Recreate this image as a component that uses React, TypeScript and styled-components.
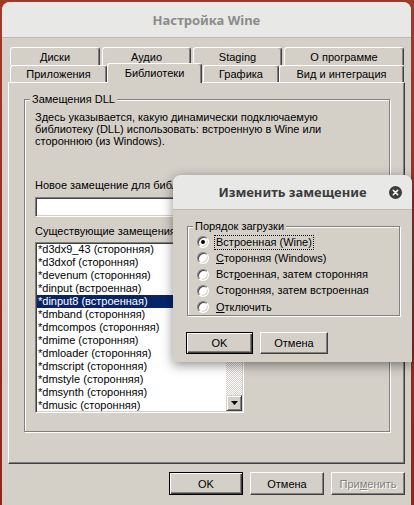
import React from 'react'
import styled, { createGlobalStyle } from 'styled-components'

const GlobalStyle = createGlobalStyle`
    html, body {
        margin: 0;
        padding: 0;
    }
    body {
        background: #8c2c1f;
        font-family: "Liberation Sans", Arial, sans-serif;
        font-size: 11px;
        color: #000;
    }
    * {
        box-sizing: border-box;
    }
`

const Desktop = styled.div`
    position: relative;
    width: 414px;
    height: 505px;
    overflow: hidden;
    padding: 2px 3px 0 2px;
    background: linear-gradient(180deg, #9b3b2b 0%, #88291c 100%);
`

const Window = styled.div`
    display: flex;
    flex-direction: column;
    width: 409px;
    height: 503px;
    border-radius: 8px 8px 0 0;
    background: #d4d0c8;
    overflow: hidden;
`

const TitleBar = styled.div<{ $active?: boolean; $h: number }>`
    flex: none;
    display: grid;
    grid-template-columns: 1fr auto 1fr;
    align-items: center;
    height: ${p => p.$h}px;
    padding: 0 10px;
    background: #e8e8e7;
    border-bottom: 1px solid #bdb9b1;
    font-family: "Noto Sans", "Open Sans", sans-serif;
    font-weight: 700;
    font-size: 13px;
    color: ${p => (p.$active ? '#3c3c3c' : '#8b8b8b')};
`

const TitleText = styled.span`
    grid-column: 2;
`

const CloseButton = styled.span`
    grid-column: 3;
    justify-self: end;
    display: flex;
    width: 13px;
    height: 13px;
`

const Body = styled.div`
    flex: 1;
    display: flex;
    flex-direction: column;
    padding: 9px 6px 0 6px;
`

const TabStrip = styled.div`
    position: relative;
    z-index: 1;
    display: flex;
    flex-direction: column;
    padding-left: 2px;
`

const TabRow = styled.div<{ $h: number; $gap?: number }>`
    display: flex;
    gap: ${p => p.$gap ?? 0}px;
    height: ${p => p.$h}px;
`

const Tab = styled.div<{ $w: number; $ml?: number; $selected?: boolean }>`
    flex: none;
    display: flex;
    align-items: center;
    justify-content: center;
    width: ${p => p.$w}px;
    height: ${p => (p.$selected ? 'calc(100% + 3px)' : '100%')};
    margin-left: ${p => p.$ml ?? 0}px;
    margin-top: ${p => (p.$selected ? -2 : 0)}px;
    padding-bottom: ${p => (p.$selected ? 2 : 0)}px;
    position: relative;
    z-index: ${p => (p.$selected ? 2 : 0)};
    border: 1px solid #fff;
    border-bottom: none;
    border-right-color: #404040;
    border-radius: 3px 3px 0 0;
    box-shadow: inset -1px 0 #808080;
    background: #d4d0c8;
    white-space: nowrap;
`

const Panel = styled.div`
    flex: none;
    display: flex;
    flex-direction: column;
    height: 382px;
    padding: 0 14px 0 15px;
    border: 1px solid;
    border-color: #fff #404040 #404040 #fff;
    box-shadow: inset -1px -1px #808080;
`

const GroupBox = styled.section<{ $mt: number }>`
    position: relative;
    display: flex;
    flex-direction: column;
    margin-top: ${p => p.$mt}px;
    border: 1px solid #808080;
    box-shadow: inset 1px 1px #fff, 1px 1px #fff;
`

const GroupTitle = styled.span`
    position: absolute;
    top: -7px;
    left: 5px;
    padding: 0 2px;
    line-height: 13px;
    background: #d4d0c8;
    white-space: nowrap;
`

const OverridesBody = styled.div`
    display: flex;
    flex-direction: column;
    padding: 11px 10px 18px;
`

const Hint = styled.p`
    margin: 0;
    line-height: 12px;
    white-space: nowrap;
`

const FieldLabel = styled.div<{ $mt: number }>`
    margin-top: ${p => p.$mt}px;
    line-height: 13px;
    white-space: nowrap;
`

const Row = styled.div<{ $mt: number }>`
    display: flex;
    gap: 8px;
    margin-top: ${p => p.$mt}px;
`

const TextInput = styled.input`
    flex: 1;
    min-width: 0;
    height: 20px;
    padding: 0 3px;
    border: 1px solid;
    border-color: #808080 #fff #fff #808080;
    box-shadow: inset 1px 1px #404040, inset -1px -1px #d4d0c8;
    background: #fff;
    font: inherit;
    outline: none;
`

const ListBox = styled.div`
    flex: none;
    display: flex;
    width: 209px;
    height: 171px;
    padding: 1px;
    border: 1px solid;
    border-color: #808080 #fff #fff #808080;
    box-shadow: inset 1px 1px #404040, inset -1px -1px #d4d0c8;
    background: #fff;
    overflow: hidden;
`

const Items = styled.ul`
    flex: 1;
    margin: -1px 0 0;
    padding: 0;
    list-style: none;
`

const Item = styled.li<{ $selected?: boolean }>`
    height: 13px;
    padding-left: 1px;
    line-height: 13px;
    white-space: nowrap;
    background: ${p => (p.$selected ? '#0a246a' : 'transparent')};
    color: ${p => (p.$selected ? '#fff' : '#000')};
`

const ScrollBar = styled.div`
    flex: none;
    display: flex;
    flex-direction: column;
    width: 16px;
`

const Track = styled.div`
    flex: 1;
    display: flex;
    flex-direction: column;
    background: repeating-conic-gradient(#d4d0c8 0 25%, #fff 0 50%) 0 0 / 2px 2px;
`

const Raised = styled.div<{ $h?: number }>`
    flex: none;
    display: flex;
    align-items: center;
    justify-content: center;
    height: ${p => (p.$h ? `${p.$h}px` : 'auto')};
    border: 1px solid;
    border-color: #d4d0c8 #404040 #404040 #d4d0c8;
    box-shadow: inset 1px 1px #fff, inset -1px -1px #808080;
    background: #d4d0c8;
`

const Button = styled.button<{ $w: number; $h: number; $default?: boolean }>`
    flex: none;
    width: ${p => p.$w}px;
    height: ${p => p.$h}px;
    padding: 0;
    font: inherit;
    color: #000;
    background: #d4d0c8;
    border: 1px solid;
    border-color: ${p => (p.$default ? '#000' : '#fff #404040 #404040 #fff')};
    box-shadow: ${p =>
        p.$default
            ? 'inset 1px 1px #fff, inset -1px -1px #404040, inset -2px -2px #808080'
            : 'inset -1px -1px #808080'};
    &:disabled {
        color: #808080;
        text-shadow: 1px 1px #fff;
    }
`

const ButtonBar = styled.div<{ $pt: number; $gap: number; $start?: boolean }>`
    display: flex;
    justify-content: ${p => (p.$start ? 'flex-start' : 'flex-end')};
    gap: ${p => p.$gap}px;
    padding-top: ${p => p.$pt}px;
`

const Dialog = styled.div`
    position: absolute;
    left: 173px;
    top: 175px;
    display: flex;
    flex-direction: column;
    width: 239px;
    height: 187px;
    border-radius: 8px 8px 0 0;
    background: #d4d0c8;
    box-shadow: 0 3px 12px rgba(0, 0, 0, 0.45);
    overflow: hidden;
`

const DialogBody = styled.div`
    display: flex;
    flex-direction: column;
    padding: 0 12px 0 13px;
`

const OrderBox = styled(GroupBox)`
    margin-left: 1px;
`

const Choices = styled.div`
    display: flex;
    flex-direction: column;
    padding: 7px 0 0 9px;
`

const Choice = styled.label`
    display: flex;
    align-items: center;
    gap: 5px;
    height: 16.25px;
    white-space: nowrap;
`

const Radio = styled.span<{ $checked?: boolean }>`
    position: relative;
    flex: none;
    width: 12px;
    height: 12px;
    border-radius: 50%;
    border: 1px solid;
    border-color: #808080 #fff #fff #808080;
    box-shadow: inset 1px 1px #404040, inset -1px -1px #d4d0c8;
    background: #fff;
    &::after {
        content: '';
        display: ${p => (p.$checked ? 'block' : 'none')};
        position: absolute;
        left: 3px;
        top: 3px;
        width: 4px;
        height: 4px;
        border-radius: 50%;
        background: #000;
    }
`

const ChoiceText = styled.span<{ $focused?: boolean }>`
    padding: 0 1px;
    line-height: 13px;
    border: 1px dotted ${p => (p.$focused ? '#000' : 'transparent')};
`

const Arrow = ({ up }: { up?: boolean }) => (
    <svg width="7" height="4" viewBox="0 0 7 4">
        <path d={up ? 'M3.5 0L7 4H0z' : 'M0 0h7L3.5 4z'} fill="#000" />
    </svg>
)

const CloseIcon = () => (
    <svg width="13" height="13" viewBox="0 0 13 13">
        <circle cx="6.5" cy="6.5" r="6.5" fill="#3c3c3c" />
        <path d="M4.3 4.3l4.4 4.4M8.7 4.3l-4.4 4.4" stroke="#fff" strokeWidth="1.6" strokeLinecap="round" />
    </svg>
)

const overrides = [
    '*d3dx9_43 (сторонняя)',
    '*d3dxof (сторонняя)',
    '*devenum (сторонняя)',
    '*dinput (встроенная)',
    '*dinput8 (встроенная)',
    '*dmband (сторонняя)',
    '*dmcompos (сторонняя)',
    '*dmime (сторонняя)',
    '*dmloader (сторонняя)',
    '*dmscript (сторонняя)',
    '*dmstyle (сторонняя)',
    '*dmsynth (сторонняя)',
    '*dmusic (сторонняя)',
]

const loadOrder: { before: string; key: string; after: string }[] = [
    { before: '', key: '', after: 'Встроенная (Wine)' },
    { before: '', key: 'С', after: 'торонняя (Windows)' },
    { before: 'Вст', key: 'р', after: 'оенная, затем сторонняя' },
    { before: 'Сто', key: 'р', after: 'онняя, затем встроенная' },
    { before: '', key: 'О', after: 'тключить' },
]

export default function App() {
    const selected = 4
    const order = 0

    return (
        <Desktop>
            <GlobalStyle />
            <Window>
                <TitleBar $h={36}>
                    <TitleText>Настройка Wine</TitleText>
                </TitleBar>
                <Body>
                    <TabStrip>
                        <TabRow $h={18} $gap={2}>
                            <Tab $w={90}>Диски</Tab>
                            <Tab $w={89}>Аудио</Tab>
                            <Tab $w={89}>Staging</Tab>
                            <Tab $w={120}>О программе</Tab>
                        </TabRow>
                        <TabRow $h={17}>
                            <Tab $w={97}>Приложения</Tab>
                            <Tab $w={95} $selected>Библиотеки</Tab>
                            <Tab $w={76} $ml={1}>Графика</Tab>
                            <Tab $w={125}>Вид и интеграция</Tab>
                        </TabRow>
                    </TabStrip>
                    <Panel>
                        <GroupBox $mt={16}>
                            <GroupTitle>Замещения DLL</GroupTitle>
                            <OverridesBody>
                                <Hint>
                                    Здесь указывается, какую динамически подключаемую
                                    <br />
                                    библиотеку (DLL) использовать: встроенную в Wine или
                                    <br />
                                    стороннюю (из Windows).
                                </Hint>
                                <FieldLabel $mt={32}>Новое замещение для библиотеки:</FieldLabel>
                                <Row $mt={5}>
                                    <TextInput defaultValue="" />
                                </Row>
                                <FieldLabel $mt={8}>Существующие замещения:</FieldLabel>
                                <Row $mt={4}>
                                    <ListBox>
                                        <Items>
                                            {overrides.map((name, i) => (
                                                <Item key={name} $selected={i === selected}>
                                                    {name}
                                                </Item>
                                            ))}
                                        </Items>
                                        <ScrollBar>
                                            <Raised $h={16}>
                                                <Arrow up />
                                            </Raised>
                                            <Track>
                                                <Raised $h={30} />
                                            </Track>
                                            <Raised $h={16}>
                                                <Arrow />
                                            </Raised>
                                        </ScrollBar>
                                    </ListBox>
                                </Row>
                            </OverridesBody>
                        </GroupBox>
                    </Panel>
                    <ButtonBar $pt={8} $gap={7}>
                        <Button $w={74} $h={23} $default>OK</Button>
                        <Button $w={74} $h={23}>Отмена</Button>
                        <Button $w={74} $h={23} disabled>
                            При<u>м</u>енить
                        </Button>
                    </ButtonBar>
                </Body>
            </Window>

            <Dialog>
                <TitleBar $active $h={35}>
                    <TitleText>Изменить замещение</TitleText>
                    <CloseButton>
                        <CloseIcon />
                    </CloseButton>
                </TitleBar>
                <DialogBody>
                    <OrderBox $mt={16}>
                        <GroupTitle>Порядок загрузки</GroupTitle>
                        <Choices>
                            {loadOrder.map((c, i) => (
                                <Choice key={i}>
                                    <Radio $checked={i === order} />
                                    <ChoiceText $focused={i === order}>
                                        {c.before}
                                        {c.key && <u>{c.key}</u>}
                                        {c.after}
                                    </ChoiceText>
                                </Choice>
                            ))}
                        </Choices>
                    </OrderBox>
                    <ButtonBar $pt={16} $gap={7} $start>
                        <Button $w={67} $h={22} $default>OK</Button>
                        <Button $w={68} $h={22}>Отмена</Button>
                    </ButtonBar>
                </DialogBody>
            </Dialog>
        </Desktop>
    )
}
